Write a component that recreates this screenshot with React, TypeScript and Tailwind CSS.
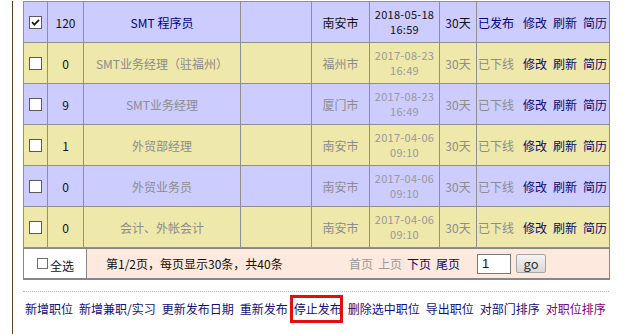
type Job = {
  id: number;
  views: string;
  title: string;
  city: string;
  date: string;
  time: string;
  days: string;
  online: boolean;
  checked?: boolean;
};

const jobs: Job[] = [
  { id: 1, views: '120', title: 'SMT 程序员', city: '南安市', date: '2018-05-18', time: '16:59', days: '30天', online: true, checked: true },
  { id: 2, views: '0', title: 'SMT业务经理（驻福州）', city: '福州市', date: '2017-08-23', time: '16:49', days: '30天', online: false },
  { id: 3, views: '9', title: 'SMT业务经理', city: '厦门市', date: '2017-08-23', time: '16:49', days: '30天', online: false },
  { id: 4, views: '1', title: '外贸部经理', city: '南安市', date: '2017-04-06', time: '09:10', days: '30天', online: false },
  { id: 5, views: '0', title: '外贸业务员', city: '南安市', date: '2017-04-06', time: '09:10', days: '30天', online: false },
  { id: 6, views: '0', title: '会计、外帐会计', city: '南安市', date: '2017-04-06', time: '09:10', days: '30天', online: false },
];

const bottomLinks = ['新增职位', '新增兼职/实习', '更新发布日期', '重新发布', '停止发布', '删除选中职位', '导出职位', '对部门排序'];

function CheckBox({ checked }: { readonly checked?: boolean }) {
  return (
    <span className="flex h-[13px] w-[13px] items-center justify-center border border-[#5b5b5b] bg-white">
      {checked && (
        <svg className="h-[9px] w-[9px]" viewBox="0 0 9 9">
          <path d="M1 4.2 L3.4 6.6 L8 1.8" fill="none" stroke="#1a1a1a" strokeWidth="1.8" />
        </svg>
      )}
    </span>
  );
}

function JobRow({ job, index }: { readonly job: Job; readonly index: number }) {
  const bg = index % 2 === 0 ? 'bg-[#ccccff]' : 'bg-[#eee8aa]';
  const dim = job.online ? 'text-[#111]' : 'text-[#8c8c8c]';
  const base = `flex h-[41px] items-center border-b border-r border-[#8f8f8f] ${bg}`;
  const cell = `${base} justify-center`;

  return (
    <>
      <div className={cell}>
        <CheckBox checked={job.checked} />
      </div>
      <div className={`${cell} text-[#111]`}>{job.views}</div>
      <div className={`${cell} ${job.online ? 'text-[#000080]' : 'text-[#8c8c8c]'}`}>{job.title}</div>
      <div className={cell} />
      <div className={`${cell} ${dim}`}>{job.city}</div>
      <div className={`${cell} flex-col text-[11px] tracking-[0.3px] ${job.online ? 'text-[#111]' : 'text-[#999]'}`}>
        <span>{job.date}</span>
        <span>{job.time}</span>
      </div>
      <div className={`${cell} ${dim}`}>{job.days}</div>
      <div className={`${base} justify-between pl-[1px] pr-[2px]`}>
        <span className={job.online ? 'text-[#000080]' : 'text-[#8c8c8c]'}>{job.online ? '已发布' : '已下线'}</span>
        <span className="flex gap-[6px] text-[#0a0a6e]">
          <span>修改</span>
          <span>刷新</span>
          <span>简历</span>
        </span>
      </div>
    </>
  );
}

export default function App() {
  return (
    <div className="h-[334px] w-[631px] overflow-hidden bg-white font-['Noto_Sans_CJK_SC',sans-serif] text-[12px] leading-[15px]">
      <div className="ml-[12px] h-full border-l border-[#5e4024] pl-[10px]">
        <div className="mt-[1px] grid w-[587px] grid-cols-[24px_36px_157px_71px_58px_70px_37px_133px] border-l border-t border-[#8f8f8f]">
          {jobs.map((job, i) => (
            <JobRow index={i} job={job} key={job.id} />
          ))}
        </div>

        <div className="flex h-[32px] w-[587px] border-x border-b-2 border-t border-[#878787]">
          <div className="flex w-[63px] items-center border-r border-[#878787] bg-white pl-[13px] text-[#111]">
            <span className="h-[11px] w-[11px] border border-[#6e6e6e]" />
            <span className="ml-[2px] mt-[3px]">全选</span>
          </div>
          <div className="flex flex-1 items-center bg-[#fde9dd]">
            <div className="w-[262px] pl-[19px] text-[#111]">第1/2页，每页显示30条，共40条</div>
            <div className="flex gap-[5px]">
              <span className="text-[#999]">首页</span>
              <span className="text-[#999]">上页</span>
              <span className="text-[#0a0a6e]">下页</span>
              <span className="text-[#0a0a6e]">尾页</span>
            </div>
            <div className="ml-[17px] flex h-[20px] w-[34px] items-center border border-[#7a7a7a] bg-white pl-[4px] font-['Liberation_Sans',sans-serif] text-[13px] text-[#111]">
              1
            </div>
            <div className="ml-[5px] flex h-[19px] w-[30px] items-center justify-center rounded-[2px] border border-[#a5a5a5] bg-gradient-to-b from-[#f4f4f4] to-[#d8d8d8] text-[13px] text-[#333]">
              go
            </div>
          </div>
        </div>

        <div className="mt-[11px] w-[586px] border-t border-dotted border-[#b5b5b5]" />

        <div className="mt-[9px] flex h-[15px] gap-[6px] pl-[2px] text-[#10107a]">
          {bottomLinks.map((label) =>
            label === '停止发布' ? (
              <span className="relative" key={label}>
                {label}
                <span className="absolute -bottom-[7px] -left-[4px] -right-[1px] -top-[6px] border-[3px] border-[#e01010]" />
              </span>
            ) : (
              <span key={label}>{label}</span>
            ),
          )}
          <span className="text-[#800080]">对职位排序</span>
        </div>
      </div>
    </div>
  );
}
